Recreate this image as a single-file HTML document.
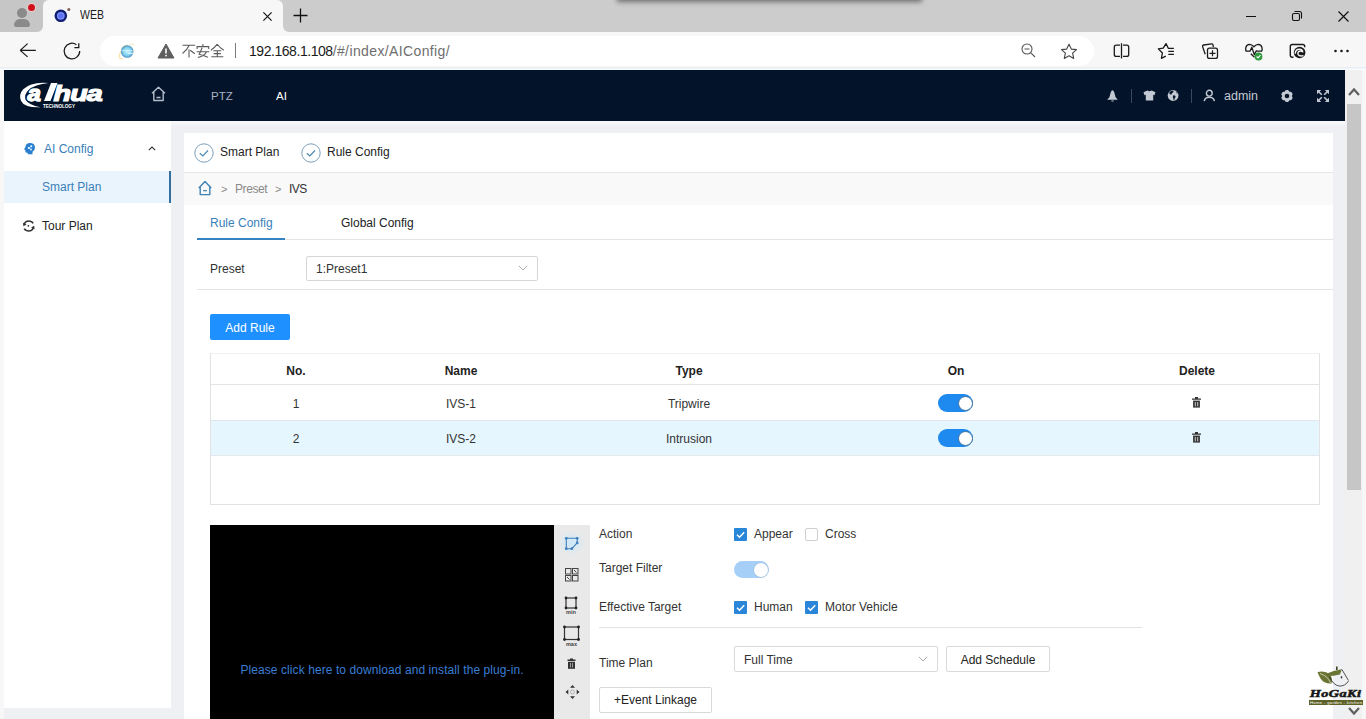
<!DOCTYPE html>
<html><head><meta charset="utf-8">
<style>
*{margin:0;padding:0;box-sizing:border-box}
html,body{width:1366px;height:719px;overflow:hidden;background:#f7f7f7;font-family:"Liberation Sans",sans-serif;position:relative}
.a{position:absolute}
.t{position:absolute;white-space:nowrap;line-height:20px;font-size:12px;color:#333}
svg{position:absolute;overflow:visible}
</style></head><body>

<!-- ===== BROWSER CHROME ===== -->
<div class="a" style="left:0;top:0;width:1366px;height:32px;background:#f7f7f7"></div>
<div class="a" style="left:0;top:0;width:1366px;height:12px;background:#cccccc"></div>
<div class="a" style="left:283px;top:0;width:1083px;height:31.5px;background:#cccccc;border-radius:0 0 0 6px"></div>
<div class="a" style="left:619px;top:-6px;width:301px;height:6px;background:#888;box-shadow:0 0 5px 2px rgba(0,0,0,.45)"></div>
<div class="a" style="left:43px;top:0;width:240px;height:32px;background:#f7f7f7;border-radius:6px 6px 0 0"></div>
<!-- profile -->
<div class="a" style="left:0;top:0;width:43px;height:31.5px;background:#c6c6c6;border-radius:0 0 6px 0"></div>
<div class="a" style="left:17px;top:8px;width:10px;height:10px;border-radius:50%;background:#8a8a8a"></div>
<div class="a" style="left:14px;top:19px;width:16px;height:8px;border-radius:8px 8px 3px 3px;background:#8a8a8a"></div>
<div class="a" style="left:28px;top:4px;width:7px;height:7px;border-radius:50%;background:#d0101a;box-shadow:0 0 0 1px #e8d0d0"></div>
<!-- active tab -->
<svg style="left:50px;top:5px" width="24" height="22"><circle cx="10.8" cy="10.8" r="5.1" fill="#7d8ef8" stroke="#0f1c72" stroke-width="2.4"/><circle cx="10.8" cy="10.8" r="2.6" fill="#5c72f2"/><circle cx="18.8" cy="4.6" r="1.5" fill="#7a5a50"/></svg>

<div class="t" style="left:80px;top:5px;font-size:12.5px;color:#1a1a1a;transform:scaleX(.84);transform-origin:0 0">WEB</div>
<svg style="left:263px;top:12px" width="9" height="9"><path d="M0.4 0.4L8.6 8.6M8.6 0.4L0.4 8.6" stroke="#111" stroke-width="1.15"/></svg>
<svg style="left:293px;top:8px" width="15" height="15"><path d="M7.5 0.5V14.5M0.5 7.5H14.5" stroke="#111" stroke-width="1.3"/></svg>
<!-- window controls -->
<div class="a" style="left:1246px;top:16px;width:10px;height:1.3px;background:#111"></div>
<svg style="left:1291px;top:10px" width="12" height="12"><rect x="1.5" y="3.5" width="7" height="7" rx="1.5" fill="none" stroke="#111" stroke-width="1.1"/><path d="M3.5 1.5H8.5Q10.5 1.5 10.5 3.5V8.5" fill="none" stroke="#111" stroke-width="1.1"/></svg>
<svg style="left:1338px;top:11px" width="11" height="11"><path d="M0.5 0.5L10.5 10.5M10.5 0.5L0.5 10.5" stroke="#111" stroke-width="1.2"/></svg>

<!-- toolbar -->
<svg style="left:19px;top:42px" width="18" height="16"><path d="M1.2 8.4H16.8M1.2 8.4L8.6 1.6M1.2 8.4L8.6 14.9" fill="none" stroke="#1a1a1a" stroke-width="1.25"/></svg>
<svg style="left:64px;top:42px" width="18" height="18"><path d="M15.7 9.1A7.8 7.8 0 1 1 12.4 2.7" fill="none" stroke="#1a1a1a" stroke-width="1.25"/><path d="M14.8 1.3V5.7H10.4" fill="none" stroke="#1a1a1a" stroke-width="1.25"/></svg>
<div class="a" style="left:100px;top:36px;width:994px;height:30px;border-radius:15px;background:#fff"></div>
<!-- IE icon -->
<svg style="left:117px;top:42px" width="20" height="18"><defs><radialGradient id="ie" cx="0.5" cy="0.5" r="0.6"><stop offset="0" stop-color="#c4f4ff"/><stop offset="0.5" stop-color="#86d4f2"/><stop offset="1" stop-color="#2d70a8"/></radialGradient></defs><path d="M6 16.5Q1 17.5 2.5 12.5Q3.5 9.5 6 7" fill="none" stroke="#f2df98" stroke-width="1.2" opacity=".8"/><path d="M12 3.2Q17 1 17.5 3.5" fill="none" stroke="#e8e0a8" stroke-width="1" opacity=".7"/><circle cx="10.2" cy="9.5" r="6.3" fill="url(#ie)"/><path d="M4.5 8.6H15.5" stroke="#d8f6ff" stroke-width="1.2" opacity=".7"/><path d="M11 11.3H16.5" stroke="#f7fdff" stroke-width="1.1" opacity=".8"/><path d="M4.8 6.5Q7 3 11 3.4" fill="none" stroke="#8a9a70" stroke-width="1" opacity=".5"/></svg>
<!-- warning -->
<svg style="left:157px;top:43px" width="18" height="16"><path d="M9 1L17 15H1Z" fill="#5f5f5f" stroke="#5f5f5f" stroke-width="1" stroke-linejoin="round"/><path d="M9 5.5V10.5" stroke="#fff" stroke-width="1.6"/><circle cx="9" cy="12.6" r="0.9" fill="#fff"/></svg>
<!-- 不安全 -->
<svg style="left:182px;top:44px" width="42" height="14">
<g fill="none" stroke="#5a5a5a" stroke-width="1.1">
<path d="M0.5 1.2H13.2M7.2 1.2Q5 6 0.5 9.5M7 5.5V13.5M8.2 6.2L12.8 9.8"/>
<path transform="translate(14.3,0)" d="M6.6 0V2.4M0.8 5V2.6H12.4V5M0.3 7.8H13M5.8 3.8Q4.5 7.5 2.8 10.2Q7 11 11.5 13.2M10 7.8Q9 11.5 1.5 13.5"/>
<path transform="translate(28.5,0)" d="M6.8 0.2Q4 4 0.3 6.2M6.8 0.2Q9.5 4 13.3 6.2M2.8 6.8H10.8M3.2 9.6H10.4M0.8 12.8H12.8M6.8 6.8V12.8"/>
</g></svg>
<div class="a" style="left:235px;top:43px;width:1px;height:15px;background:#7a7a7a"></div>
<div class="t" style="left:249px;top:41px;font-size:14px;color:#1a1a1a;letter-spacing:-0.45px">192.168.1.108<span style="color:#6e6e6e;letter-spacing:0.38px">/#/index/AIConfig/</span></div>
<!-- zoom & star -->
<svg style="left:1021px;top:43px" width="16" height="16"><circle cx="6" cy="6" r="5" fill="none" stroke="#555" stroke-width="1.1"/><path d="M3.5 6H8.5M9.6 9.6L14 14" stroke="#555" stroke-width="1.1"/></svg>
<svg style="left:1060px;top:43px" width="18" height="17"><path d="M9 1.2L11.3 6.1L16.5 6.6L12.6 10.1L13.7 15.4L9 12.7L4.3 15.4L5.4 10.1L1.5 6.6L6.7 6.1Z" fill="none" stroke="#444" stroke-width="1.1" stroke-linejoin="round"/></svg>
<!-- right toolbar icons -->
<svg style="left:1112px;top:42px" width="18" height="18"><path d="M8 3.2H4.3Q2.3 3.2 2.3 5.2V12.4Q2.3 14.4 4.3 14.4H8M11 3.2H14.7Q16.7 3.2 16.7 5.2V12.4Q16.7 14.4 14.7 14.4H11M9.5 1.3V16.6" fill="none" stroke="#1a1a1a" stroke-width="1.3"/></svg>
<svg style="left:1156px;top:42px" width="20" height="18"><path d="M9.8 14.1L5.4 16.3L6.4 11L2.3 6.9L7.2 6.2L10 1.6L12.3 6.3H17.9M12.3 9.4H17.9M12.3 12.4H17.9" fill="none" stroke="#1a1a1a" stroke-width="1.3" stroke-linejoin="round"/></svg>
<svg style="left:1200px;top:42px" width="20" height="18"><path d="M5.2 12.2L2.6 4.6Q2.3 3.3 3.6 3L11.6 1.9Q12.9 1.8 13.1 3.1L13.3 5" fill="none" stroke="#1a1a1a" stroke-width="1.3" stroke-linejoin="round"/><rect x="7.5" y="6.2" width="10" height="10.2" rx="2" fill="#f7f7f7" stroke="#1a1a1a" stroke-width="1.3"/><path d="M12.5 8.3V14.3M9.5 11.3H15.5" stroke="#1a1a1a" stroke-width="1.2"/></svg>
<svg style="left:1244px;top:42px" width="21" height="19"><path d="M2.2 9.2Q1.3 7.8 1.8 5.6Q2.6 2.5 5.5 2.4Q7.8 2.4 9.9 4.7Q12 2.4 14.3 2.4Q17.2 2.5 18 5.6Q18.5 7.8 17.6 9.2" fill="none" stroke="#1a1a1a" stroke-width="1.3"/><path d="M1.8 9.2H6L7.8 5.3L10.3 12.6L12.3 8.8L13 9.2H18" fill="none" stroke="#1a1a1a" stroke-width="1.3" stroke-linejoin="round"/><path d="M6.8 11.8L10.5 15.2" stroke="#1a1a1a" stroke-width="1.3"/><circle cx="14.5" cy="14.5" r="3.9" fill="#2e9a3c"/><path d="M12.6 14.5L14 15.9L16.5 13.2" fill="none" stroke="#fff" stroke-width="1.1"/></svg>
<svg style="left:1288px;top:42px" width="20" height="18"><path d="M5.5 15.2H4.2Q2.3 15.2 2.3 13.3V4.4Q2.3 2.5 4.2 2.5H14.8Q16.7 2.5 16.7 4.4V5.2" fill="none" stroke="#1a1a1a" stroke-width="1.4"/><circle cx="11.6" cy="10.5" r="5.8" fill="#1a1a1a"/><path d="M7.2 11.8Q7.4 7.2 11.5 7.3Q14.5 7.6 14.6 9.6Q12.5 8.4 10.6 9.6Q9.3 10.8 10.2 12.6Q11.5 14.6 15.5 13.6" fill="none" stroke="#f7f7f7" stroke-width="1.4"/></svg>
<svg style="left:1334px;top:49px" width="16" height="4"><circle cx="1.5" cy="2" r="1.3" fill="#1a1a1a"/><circle cx="7.5" cy="2" r="1.3" fill="#1a1a1a"/><circle cx="13.5" cy="2" r="1.3" fill="#1a1a1a"/></svg>
<div class="a" style="left:0;top:67px;width:1366px;height:3px;background:linear-gradient(#eceef1 0,#eceef1 33%,#eff5fc 33%,#eff5fc 66%,#f8fbff 66%)"></div>

<!-- ===== PAGE ===== -->
<div class="a" style="left:0;top:70px;width:1345px;height:649px;background:#eff0f4"></div>
<div class="a" style="left:0;top:70px;width:4px;height:649px;background:#f7f7f7"></div>
<!-- scrollbar -->
<div class="a" style="left:1345px;top:70px;width:21px;height:649px;background:#f7f7f7"></div>
<div class="a" style="left:1345px;top:70px;width:17px;height:649px;background:#f0f0f0"></div>
<div class="a" style="left:1347px;top:104px;width:14px;height:386px;background:#c6c6c6"></div>
<svg style="left:1348px;top:87px" width="12" height="9"><path d="M1 8L6 2.5L11 8" fill="none" stroke="#606060" stroke-width="2.2"/></svg>
<svg style="left:1348px;top:707px" width="12" height="9"><path d="M1 1L6 6.5L11 1" fill="none" stroke="#606060" stroke-width="2.2"/></svg>

<!-- header -->
<div class="a" style="left:4px;top:70px;width:1341px;height:51px;background:#03142a"></div>

<div class="a" style="left:4px;top:121px;width:1341px;height:6px;background:linear-gradient(#f8fafd,#eff0f4)"></div>
<!-- sidebar -->
<div class="a" style="left:4px;top:121px;width:167px;height:587px;background:#fff"></div>


<!-- logo -->
<svg style="left:19px;top:81px" width="90" height="30">
<path d="M29.5 2Q12 0.5 4.2 8.3Q-0.5 13.5 2 19.8Q5 26.8 21.5 26.3Q9.5 24 6.5 18.8Q4.8 13.8 9.5 9Q15.5 3.5 29.5 2Z" fill="#fff"/>
<g transform="translate(8.5,20) scale(1.12,1)"><text x="0" y="0" font-family="Liberation Sans" font-weight="700" font-style="italic" font-size="21.5" fill="#fff" stroke="#fff" stroke-width="1.3">a</text></g>
<path d="M32 2H38.5L31.5 20H25Z" fill="#fff"/>
<g transform="translate(34.5,20) scale(1.3,1)"><text x="0" y="0" font-family="Liberation Sans" font-weight="700" font-style="italic" font-size="22" fill="#fff" stroke="#fff" stroke-width="1.2" letter-spacing="-0.6">hua</text></g>
<text x="24" y="27" font-family="Liberation Sans" font-weight="700" font-size="4.6" fill="#fff" letter-spacing="-0.05">TECHNOLOGY</text>
</svg>
<!-- home -->
<svg style="left:151px;top:86px" width="15" height="16"><path d="M1 7.2L7.5 1.2L14 7.2M2.8 5.8V14.5H12.2V5.8M5.5 11.5H9.5" fill="none" stroke="#b3bccb" stroke-width="1.4" stroke-linejoin="round"/></svg>
<div class="t" style="left:211px;top:86px;font-size:11.5px;color:#a9b3c2">PTZ</div>
<div class="t" style="left:276px;top:86px;font-size:11.5px;color:#ffffff">AI</div>
<!-- right header -->
<svg style="left:1106px;top:89px" width="13" height="14"><path d="M6.5 1.2Q7.6 1.2 8.2 3.2L9.6 8.2L11.8 10.8H1.2L3.4 8.2L4.8 3.2Q5.4 1.2 6.5 1.2ZM5.2 11.4H7.8Q7.6 12.6 6.5 12.6Q5.4 12.6 5.2 11.4Z" fill="#c3c9d3"/></svg>
<div class="a" style="left:1131px;top:89px;width:1px;height:14px;background:#3a4a5e"></div>
<svg style="left:1143px;top:90px" width="13" height="11"><path d="M4.3 0.5L0.5 2.3L1.5 5.2L2.8 4.8V10.5H10.2V4.8L11.5 5.2L12.5 2.3L8.7 0.5Q6.5 2 4.3 0.5Z" fill="#c3c9d3"/></svg>
<svg style="left:1167px;top:89px" width="13" height="13"><circle cx="6.1" cy="6.5" r="5.4" fill="#c3c9d3"/><path d="M2.5 3.2Q4 1.6 6.5 1.8Q6.8 3.2 5.6 3.8Q4.5 4.2 4.6 5.4Q3.2 5.8 2.3 4.6Z" fill="#03142a"/><path d="M6.2 6.4Q8 6 8.6 7.6Q8.4 9 7.6 9.6L7.2 11.4Q6.2 11 6.4 9.6Q5.4 8.2 6.2 6.4Z" fill="#03142a"/><path d="M9.2 2.6Q10.4 3.4 10.6 4.6L9.6 4.2Z" fill="#03142a"/></svg>
<div class="a" style="left:1191px;top:89px;width:1px;height:14px;background:#3a4a5e"></div>
<svg style="left:1203px;top:89px" width="13" height="13"><circle cx="6.3" cy="4.2" r="2.9" fill="none" stroke="#c3c9d3" stroke-width="1.4"/><path d="M1.2 12.2Q1.8 8.2 6.3 8.2Q10.8 8.2 11.4 12.2" fill="none" stroke="#c3c9d3" stroke-width="1.4"/></svg>
<div class="t" style="left:1224px;top:86px;font-size:12.5px;color:#c3c9d3">admin</div>
<svg style="left:1281px;top:90px" width="12" height="12"><path d="M4.27 0.67 L4.96 0.09 L7.04 0.09 L7.73 0.67 L8.40 1.84 L9.75 1.84 L10.60 2.14 L11.64 3.95 L11.48 4.84 L10.80 6.00 L11.48 7.16 L11.64 8.05 L10.60 9.86 L9.75 10.16 L8.40 10.16 L7.73 11.33 L7.04 11.91 L4.96 11.91 L4.27 11.33 L3.60 10.16 L2.25 10.16 L1.40 9.86 L0.36 8.05 L0.52 7.16 L1.20 6.00 L0.52 4.84 L0.36 3.95 L1.40 2.14 L2.25 1.84 L3.60 1.84Z" fill="#c3c9d3"/><circle cx="6" cy="6" r="2.3" fill="#03142a"/></svg>
<svg style="left:1316px;top:89px" width="14" height="14"><g fill="#c3c9d3"><path d="M1 1H5.2L1 5.2Z"/><path d="M13 1H8.8L13 5.2Z"/><path d="M1 13H5.2L1 8.8Z"/><path d="M13 13H8.8L13 8.8Z"/></g><path d="M2.5 2.5L5.8 5.8M11.5 2.5L8.2 5.8M2.5 11.5L5.8 8.2M11.5 11.5L8.2 8.2" stroke="#c3c9d3" stroke-width="1.6"/></svg>

<!-- sidebar content -->
<svg style="left:23px;top:142px" width="13" height="13"><path d="M9.5 12.2V9.8Q12.2 8.3 12 5.2Q11.6 1 7 1Q2.8 1 2.4 5L1 7.6L2.4 8.1V10Q2.7 11 4.5 10.8L5 12.2Z" fill="#2a80cf"/><g fill="#dff4ff"><circle cx="5.8" cy="6" r="1.1"/><circle cx="8.3" cy="4.2" r="1"/><circle cx="8" cy="7.5" r="0.9"/></g><path d="M5.8 6L8.3 4.2M5.8 6L8 7.5" stroke="#dff4ff" stroke-width="0.7"/></svg>
<div class="t" style="left:44px;top:139px;color:#3a80b9">AI Config</div>
<svg style="left:148px;top:146px" width="8" height="5"><path d="M0.8 4.2L4 1L7.2 4.2" fill="none" stroke="#333" stroke-width="1.1"/></svg>
<div class="a" style="left:4px;top:171px;width:165px;height:32px;background:#eaf4fd"></div>
<div class="a" style="left:169px;top:171px;width:2px;height:32px;background:#336f9e"></div>
<div class="t" style="left:42px;top:177px;color:#3a80b9">Smart Plan</div>
<svg style="left:23px;top:220px" width="12" height="12"><path d="M1.2 4.6Q2.2 1 5.6 1Q8.8 1 10.2 3.4M10.4 7.2Q9.4 11 5.8 11Q2.6 11 1.2 8.6" fill="none" stroke="#333" stroke-width="1.5"/><path d="M0 2.8L3.6 4.6L0.4 6.2Z" fill="#333"/><path d="M11.6 9.2L8 7.4L11.2 5.8Z" fill="#333"/><circle cx="5.4" cy="5.8" r="0.9" fill="#333"/></svg>
<div class="t" style="left:42px;top:216px;color:#222">Tour Plan</div>

<!-- content panel -->
<div class="a" style="left:184px;top:133px;width:1149px;height:586px;background:#fff"></div>


<!-- steps -->
<svg style="left:194px;top:143px" width="20" height="20"><circle cx="10" cy="10" r="9.2" fill="none" stroke="#7b9fbb" stroke-width="1"/><path d="M5.8 10.2L8.8 13L14 7.5" fill="none" stroke="#4f88b3" stroke-width="1.2"/></svg>
<div class="t" style="left:220px;top:142px;color:#222">Smart Plan</div>
<svg style="left:301px;top:143px" width="20" height="20"><circle cx="10" cy="10" r="9.2" fill="none" stroke="#7b9fbb" stroke-width="1"/><path d="M5.8 10.2L8.8 13L14 7.5" fill="none" stroke="#4f88b3" stroke-width="1.2"/></svg>
<div class="t" style="left:327px;top:142px;color:#222">Rule Config</div>
<div class="a" style="left:184px;top:172px;width:1149px;height:1px;background:#e6e6e6"></div>
<!-- breadcrumb -->
<div class="a" style="left:184px;top:173px;width:1149px;height:32px;background:#f9f9f9"></div>
<svg style="left:198px;top:180px" width="15" height="16"><path d="M0.8 8L7 1.4L13.2 8M2.2 6.6V14.6H11.8V6.6M5.2 10.6H8.8" fill="none" stroke="#3f82b5" stroke-width="1.4" stroke-linejoin="round"/></svg>
<div class="t" style="left:221px;top:179px;color:#888;font-size:11px">&gt;</div>
<div class="t" style="left:235px;top:179px;color:#8a8a8a;letter-spacing:-0.4px">Preset</div>
<div class="t" style="left:275px;top:179px;color:#888;font-size:11px">&gt;</div>
<div class="t" style="left:289px;top:179px;color:#333;letter-spacing:-0.5px">IVS</div>
<!-- tabs -->
<div class="t" style="left:210px;top:213px;color:#3a80b9">Rule Config</div>
<div class="t" style="left:341px;top:213px;color:#222">Global Config</div>
<div class="a" style="left:197px;top:239px;width:1136px;height:1px;background:#e4e4e4"></div>
<div class="a" style="left:197px;top:238px;width:88px;height:2px;background:#3583c2"></div>
<!-- preset -->
<div class="t" style="left:210px;top:259px;color:#333">Preset</div>
<div class="a" style="left:306px;top:256px;width:232px;height:25px;border:1px solid #d6d6d6;border-radius:2px;background:#fff"></div>
<div class="t" style="left:316px;top:259px;color:#333">1:Preset1</div>
<svg style="left:518px;top:265px" width="10" height="6"><path d="M0.8 0.8L5 5L9.2 0.8" fill="none" stroke="#aaa" stroke-width="1"/></svg>
<div class="a" style="left:197px;top:289px;width:1136px;height:1px;background:#e4e4e4"></div>
<!-- add rule -->
<div class="a" style="left:210px;top:314px;width:80px;height:26px;border-radius:2px;background:#1e90ff"></div>
<div class="t" style="left:210px;top:318px;width:80px;text-align:center;color:#fff">Add Rule</div>
<!-- table -->
<div class="a" style="left:210px;top:353px;width:1110px;height:152px;border:1px solid #e2e2e2;border-top-color:#f0f0f0;background:#fff"></div>
<div class="a" style="left:211px;top:384px;width:1108px;height:1px;background:#e4e4e4"></div>
<div class="a" style="left:211px;top:420px;width:1108px;height:35px;background:#e6f6fe"></div>
<div class="a" style="left:211px;top:420px;width:1108px;height:1px;background:#e0e8ee"></div>
<div class="a" style="left:211px;top:455px;width:1108px;height:1px;background:#e4e8ec"></div>
<div class="t" style="left:196px;top:361px;width:200px;text-align:center;font-weight:700;color:#222">No.</div>
<div class="t" style="left:361px;top:361px;width:200px;text-align:center;font-weight:700;color:#222">Name</div>
<div class="t" style="left:589px;top:361px;width:200px;text-align:center;font-weight:700;color:#222">Type</div>
<div class="t" style="left:856px;top:361px;width:200px;text-align:center;font-weight:700;color:#222">On</div>
<div class="t" style="left:1097px;top:361px;width:200px;text-align:center;font-weight:700;color:#222">Delete</div>

<div class="t" style="left:196px;top:394px;width:200px;text-align:center;color:#333">1</div>
<div class="t" style="left:361px;top:394px;width:200px;text-align:center;color:#333">IVS-1</div>
<div class="t" style="left:589px;top:394px;width:200px;text-align:center;color:#333">Tripwire</div>
<div class="t" style="left:196px;top:429px;width:200px;text-align:center;color:#333">2</div>
<div class="t" style="left:361px;top:429px;width:200px;text-align:center;color:#333">IVS-2</div>
<div class="t" style="left:589px;top:429px;width:200px;text-align:center;color:#333">Intrusion</div>

<div class="a" style="left:938px;top:394px;width:35px;height:18px;border-radius:9px;background:#1e8af0"></div>
<div class="a" style="left:958px;top:395.5px;width:15px;height:15px;border-radius:50%;background:#fff;border:1px solid #3c6e9e"></div>
<div class="a" style="left:938px;top:429px;width:35px;height:18px;border-radius:9px;background:#1e8af0"></div>
<div class="a" style="left:958px;top:430.5px;width:15px;height:15px;border-radius:50%;background:#fff;border:1px solid #3c6e9e"></div>
<svg style="left:1191px;top:396px" width="11" height="13"><path d="M4 1H7V2.4H10V3.8H1V2.4H4Z" fill="#333"/><path d="M2.1 4.6H8.9V11.6H2.1Z" fill="#333"/><path d="M4.3 6V10.4M6.7 6V10.4" stroke="#ddd" stroke-width="0.9"/></svg>
<svg style="left:1191px;top:431px" width="11" height="13"><path d="M4 1H7V2.4H10V3.8H1V2.4H4Z" fill="#333"/><path d="M2.1 4.6H8.9V11.6H2.1Z" fill="#333"/><path d="M4.3 6V10.4M6.7 6V10.4" stroke="#ddd" stroke-width="0.9"/></svg>

<!-- video -->
<div class="a" style="left:210px;top:525px;width:344px;height:194px;background:#000"></div>
<div class="t" style="left:210px;top:660px;width:344px;text-align:center;color:#3a7dd4;letter-spacing:0.08px">Please click here to download and install the plug-in.</div>
<div class="a" style="left:554px;top:525px;width:36px;height:194px;background:#e9e9e9"></div>
<div class="a" style="left:558px;top:531px;width:27px;height:24px;border-radius:50%;background:radial-gradient(closest-side,rgba(200,232,252,.9),rgba(220,240,252,0))"></div>
<svg style="left:564px;top:536px" width="15" height="15"><path d="M2.3 2.3H13.2V6.9L7.8 12.7H2.3Z" fill="none" stroke="#3f7fbf" stroke-width="1.1"/><g fill="#3f7fbf"><circle cx="2.3" cy="2.3" r="1.4"/><circle cx="13.2" cy="2.3" r="1.4"/><circle cx="13.2" cy="6.9" r="1.4"/><circle cx="7.8" cy="12.7" r="1.4"/><circle cx="2.3" cy="12.7" r="1.4"/></g></svg>
<svg style="left:565px;top:568px" width="14" height="14"><g fill="none" stroke="#444" stroke-width="1"><rect x="0.5" y="0.5" width="5.5" height="5.5"/><rect x="7.5" y="0.5" width="5.5" height="5.5"/><rect x="0.5" y="7.5" width="5.5" height="5.5"/><rect x="7.5" y="7.5" width="5.5" height="5.5"/></g><path d="M9 2L11.5 4.5M2 9L4.5 11.5" stroke="#444" stroke-width="1"/></svg>
<svg style="left:564px;top:596px" width="15" height="20"><rect x="2" y="2" width="10" height="10" fill="none" stroke="#333" stroke-width="1.2"/><g fill="#222"><circle cx="2" cy="2" r="1.4"/><circle cx="12" cy="2" r="1.4"/><circle cx="2" cy="12" r="1.4"/><circle cx="12" cy="12" r="1.4"/></g><text x="7" y="18" text-anchor="middle" font-family="Liberation Sans" font-size="5.5" font-weight="700" fill="#444">min</text></svg>
<svg style="left:562px;top:625px" width="19" height="23"><rect x="2.5" y="2" width="14" height="12.5" fill="none" stroke="#333" stroke-width="1.2"/><g fill="#222"><circle cx="2.5" cy="2" r="1.4"/><circle cx="16.5" cy="2" r="1.4"/><circle cx="2.5" cy="14.5" r="1.4"/><circle cx="16.5" cy="14.5" r="1.4"/></g><text x="9.5" y="21" text-anchor="middle" font-family="Liberation Sans" font-size="5.5" font-weight="700" fill="#444">max</text></svg>
<svg style="left:567px;top:658px" width="9" height="12"><path d="M3 0.5H6V1.5H8.5V3H0.5V1.5H3Z" fill="#333"/><path d="M1 3.8H8V10.8H1Z" fill="#333"/><path d="M3.5 5V9.5M5.5 5V9.5" stroke="#bbb" stroke-width="0.8"/></svg>
<svg style="left:565px;top:685px" width="15" height="14"><g fill="#333"><path d="M7.5 0L10 2.8H5Z"/><path d="M7.5 14L10 11.2H5Z"/><path d="M0.5 7L3.3 4.5V9.5Z"/><path d="M14.5 7L11.7 4.5V9.5Z"/></g><circle cx="7.5" cy="7" r="2" fill="none" stroke="#999" stroke-width="0.7"/></svg>

<!-- form -->
<div class="t" style="left:599px;top:524px;color:#333">Action</div>
<div class="a" style="left:734px;top:528px;width:13px;height:13px;border-radius:1px;background:#2a86d9"></div>
<svg style="left:734px;top:528px" width="13" height="13"><path d="M3 6.8L5.5 9.2L10.2 4.2" fill="none" stroke="#fff" stroke-width="1.5"/></svg>
<div class="t" style="left:754px;top:524px;color:#333">Appear</div>
<div class="a" style="left:805px;top:528px;width:13px;height:13px;border-radius:2px;border:1px solid #cfcfcf;background:#fff"></div>
<div class="t" style="left:825px;top:524px;color:#333">Cross</div>
<div class="t" style="left:599px;top:558px;color:#333">Target Filter</div>
<div class="a" style="left:734px;top:561px;width:35px;height:17px;border-radius:9px;background:#a5cff7"></div>
<div class="a" style="left:754px;top:562.5px;width:14px;height:14px;border-radius:50%;background:#fff;box-shadow:0 0 0 .6px rgba(150,170,190,.5)"></div>
<div class="t" style="left:599px;top:597px;color:#333">Effective Target</div>
<div class="a" style="left:734px;top:601px;width:13px;height:13px;border-radius:1px;background:#2a86d9"></div>
<svg style="left:734px;top:601px" width="13" height="13"><path d="M3 6.8L5.5 9.2L10.2 4.2" fill="none" stroke="#fff" stroke-width="1.5"/></svg>
<div class="t" style="left:754px;top:597px;color:#333">Human</div>
<div class="a" style="left:805px;top:601px;width:13px;height:13px;border-radius:1px;background:#2a86d9"></div>
<svg style="left:805px;top:601px" width="13" height="13"><path d="M3 6.8L5.5 9.2L10.2 4.2" fill="none" stroke="#fff" stroke-width="1.5"/></svg>
<div class="t" style="left:825px;top:597px;color:#333">Motor Vehicle</div>
<div class="a" style="left:599px;top:627px;width:543px;height:1px;background:#e2e2e2"></div>
<div class="t" style="left:599px;top:653px;color:#333">Time Plan</div>
<div class="a" style="left:734px;top:646px;width:204px;height:26px;border:1px solid #d9d9d9;border-radius:2px;background:#fff"></div>
<div class="t" style="left:744px;top:650px;color:#333">Full Time</div>
<svg style="left:918px;top:656px" width="10" height="6"><path d="M0.8 0.8L5 5L9.2 0.8" fill="none" stroke="#aaa" stroke-width="1"/></svg>
<div class="a" style="left:946px;top:646px;width:104px;height:26px;border:1px solid #d9d9d9;border-radius:2px;background:#fff"></div>
<div class="t" style="left:946px;top:650px;width:104px;text-align:center;color:#222">Add Schedule</div>
<div class="a" style="left:599px;top:687px;width:113px;height:26px;border:1px solid #d9d9d9;border-radius:2px;background:#fff"></div>
<div class="t" style="left:599px;top:690px;width:113px;text-align:center;color:#222">+Event Linkage</div>

<!-- watermark -->
<svg style="left:1300px;top:655px" width="66" height="64">
<path d="M17.5 17Q25 15 30 19.5Q33 24 31.5 28.5Q24 29 20.5 23.5Q18.5 20 17.5 17Z" fill="#6b7433"/>
<path d="M20 18.5Q28 21 30.5 28" fill="none" stroke="#e8ecd8" stroke-width="0.7"/>
<path d="M27 18.5Q33 15.5 41.8 14.3L40 19.5Q33 21 28.5 21Z" fill="#6b7433"/>
<rect x="36" y="11.5" width="1.6" height="3.5" fill="#3e4420"/>
<path d="M41.8 14.3L48.5 25.5" fill="none" stroke="#2a2a2a" stroke-width="0.8"/>
<path d="M29.5 21.5Q33 30 39 31Q45 31.5 48.5 26" fill="none" stroke="#2a2a2a" stroke-width="0.8"/>
<rect x="40.8" y="21.2" width="1.4" height="2.2" fill="#333"/>
<g transform="translate(35.5,41.8) scale(1.3,1)"><text x="0" y="0" text-anchor="middle" font-family="Liberation Serif" font-weight="700" font-style="italic" font-size="11" fill="#151515" stroke="#151515" stroke-width="0.5" letter-spacing="0.3">HoGaKi</text></g>
<rect x="9" y="45" width="54" height="5" fill="#5e6128"/>
<text x="36" y="49.2" text-anchor="middle" font-family="Liberation Sans" font-weight="400" font-size="4.2" fill="#ffffff" textLength="52">Home - garden - kitchen</text>
</svg>
</body></html>
